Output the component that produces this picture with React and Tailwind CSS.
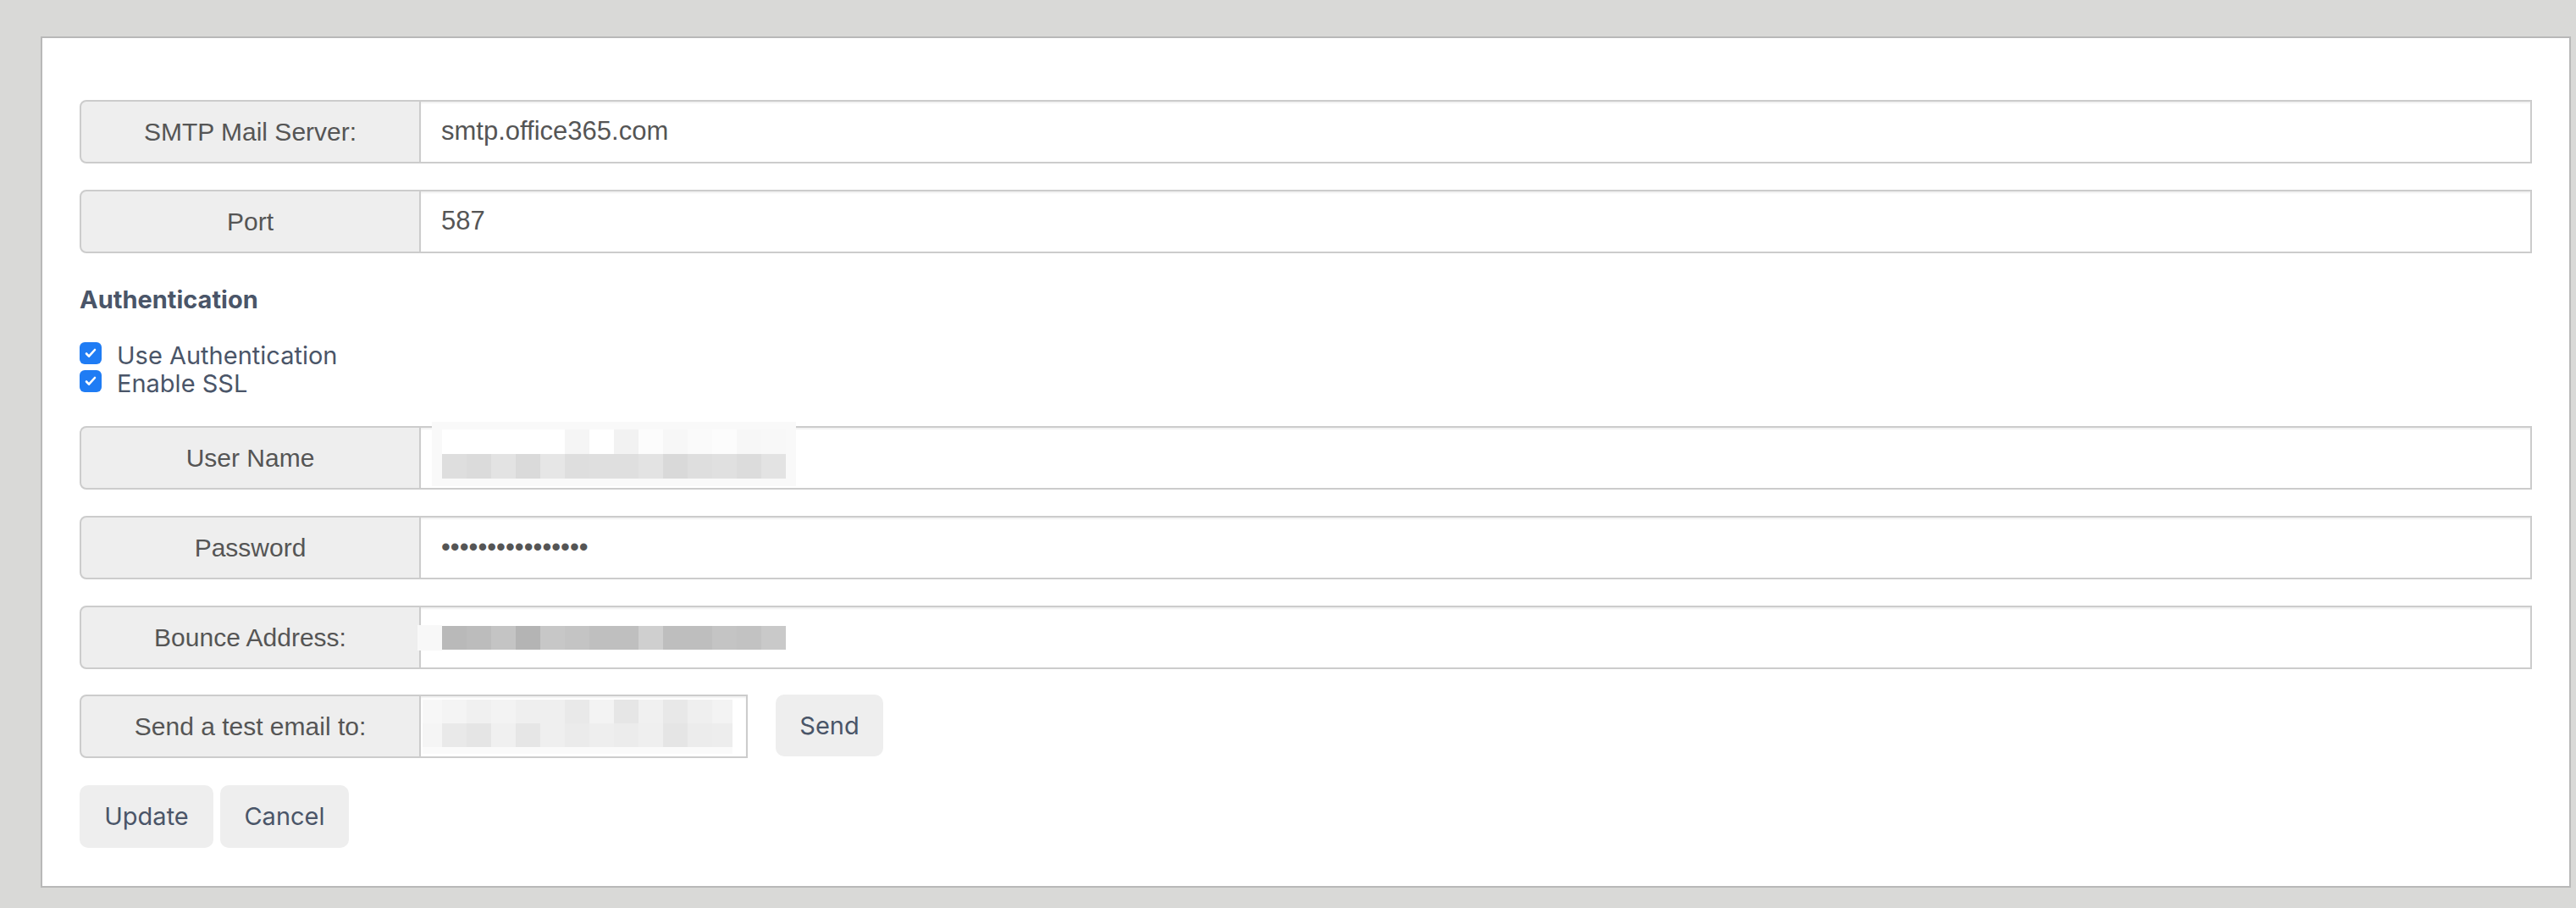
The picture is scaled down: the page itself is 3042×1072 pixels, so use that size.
import React from 'react'

const userNameBlocks = [
  ['#ffffff', '#ffffff', '#ffffff', '#ffffff', '#ffffff', '#f5f5f5', '#ffffff', '#f2f2f2', '#fcfcfc', '#f7f7f7', '#fafafa', '#fcfcfc', '#f7f7f7', '#f8f8f8'],
  ['#dedede', '#dbdbdb', '#e3e3e3', '#dadada', '#e6e6e6', '#dedede', '#dfdfdf', '#dfdfdf', '#e3e3e3', '#d9d9d9', '#dedede', '#e0e0e0', '#dcdcdc', '#e3e3e3'],
]

const bounceBlocks = [
  ['#b9b9b9', '#bcbcbc', '#c4c4c4', '#b4b4b4', '#c7c7c7', '#c4c4c4', '#bfbfbf', '#bfbfbf', '#cfcfcf', '#bebebe', '#bebebe', '#c4c4c4', '#c2c2c2', '#c9c9c9'],
]

const testEmailBlocks = [
  ['#f7f7f7', '#f4f4f4', '#f0f0f0', '#f3f3f3', '#efefef', '#efefef', '#e9e9e9', '#f3f3f3', '#e6e6e6', '#f0f0f0', '#e8e8e8', '#efefef', '#f3f3f3'],
  ['#f5f5f5', '#e9e9e9', '#e5e5e5', '#f0f0f0', '#e6e6e6', '#efefef', '#ebebeb', '#eeeeee', '#ececec', '#efefef', '#e5e5e5', '#ececec', '#ededed'],
]

// blurred-out value, drawn as a pixel mosaic
const Mosaic = ({ rows, widths, height }) => (
  <div className="flex flex-col">
    {rows.map((row, i) => (
      <div key={i} className="flex">
        {row.map((color, j) => (
          <div
            key={j}
            style={{ backgroundColor: color, width: widths ? widths[j] : 29, height }}
          />
        ))}
      </div>
    ))}
  </div>
)

const Field = ({ label, children, inputClass = 'flex-1' }) => (
  <div className="flex h-[75px]">
    <div className="w-[403px] shrink-0 flex items-center justify-center bg-[#eeeeee] border-2 border-[#cccccc] rounded-l-[8px] text-[30px] text-[#555555] font-['Liberation_Sans',Arial,sans-serif]">
      {label}
    </div>
    <div
      className={`${inputClass} flex items-center bg-white border-2 border-l-0 border-[#cccccc] shadow-[inset_0_2px_2px_rgba(0,0,0,0.06)] text-[31px] text-[#555555] font-['Liberation_Sans',Arial,sans-serif]`}
    >
      {children}
    </div>
  </div>
)

const CheckRow = ({ label }) => (
  <label className="flex items-start h-[33px]">
    <span className="mt-[1px] w-[26px] h-[26px] rounded-[6px] bg-[#1f7cf4] flex items-center justify-center">
      <svg width="16" height="16" viewBox="0 0 16 16" fill="none">
        <path d="M3 8.5l3 3.2L13 4" stroke="white" strokeWidth="2.6" strokeLinecap="round" strokeLinejoin="round" />
      </svg>
    </span>
    <span className="ml-[18px] text-[29px] leading-[33px] text-[#4a5568] font-['Inter',sans-serif]">{label}</span>
  </label>
)

const App = () => {
  return (
    <div className="min-h-screen bg-[#d9d9d7] pt-[43px] pl-[48px] pr-[6px] pb-[23px]">
      <div className="bg-white border-2 border-[#b8b8b8] px-[44px] pt-[73px] pb-[45px]">
        <div className="flex flex-col gap-[31px]">
          <Field label="SMTP Mail Server:">
            <span className="pl-[24px]">smtp.office365.com</span>
          </Field>
          <Field label="Port">
            <span className="pl-[24px]">587</span>
          </Field>
        </div>

        {/* Authentication */}
        <h3 className="mt-[40px] text-[29px] leading-[30px] font-bold text-[#4a5568] font-['Inter',sans-serif]">
          Authentication
        </h3>
        <div className="mt-[34px] flex flex-col">
          <CheckRow label="Use Authentication" />
          <CheckRow label="Enable SSL" />
        </div>

        <div className="mt-[34px] flex flex-col gap-[31px]">
          <Field label="User Name">
            <div className="ml-[13px] self-start -mt-[7px] bg-[#f9f9f9] px-[12px] pt-[9px] pb-[9px]">
              <Mosaic rows={userNameBlocks} height={29} />
            </div>
          </Field>
          <Field label="Password">
            <span className="pl-[24px]">••••••••••••••••</span>
          </Field>
          <Field label="Bounce Address:">
            <div className="flex items-center">
              <div className="w-[29px] h-[30px] bg-[#f8f8f8] -ml-[4px]" />
              <Mosaic rows={bounceBlocks} height={28} />
            </div>
          </Field>
        </div>

        {/* Test email */}
        <div className="mt-[30px] flex items-start">
          <Field label="Send a test email to:" inputClass="w-[386px]">
            <div className="ml-[2px] flex flex-col bg-[#fafafa] pb-[8px]">
              <Mosaic
                rows={testEmailBlocks}
                widths={[23, 29, 29, 29, 29, 29, 29, 29, 29, 29, 29, 29, 24]}
                height={28}
              />
            </div>
          </Field>
          <button className="ml-[33px] h-[73px] w-[127px] rounded-[10px] bg-[#eeeeee] text-[29px] text-[#4a5568] font-['Inter',sans-serif]">
            Send
          </button>
        </div>

        {/* Buttons */}
        <div className="mt-[32px] flex gap-[8px]">
          <button className="h-[74px] w-[158px] rounded-[10px] bg-[#eeeeee] text-[29px] text-[#4a5568] font-['Inter',sans-serif]">
            Update
          </button>
          <button className="h-[74px] w-[152px] rounded-[10px] bg-[#eeeeee] text-[29px] text-[#4a5568] font-['Inter',sans-serif]">
            Cancel
          </button>
        </div>
      </div>
    </div>
  )
}

export default App
